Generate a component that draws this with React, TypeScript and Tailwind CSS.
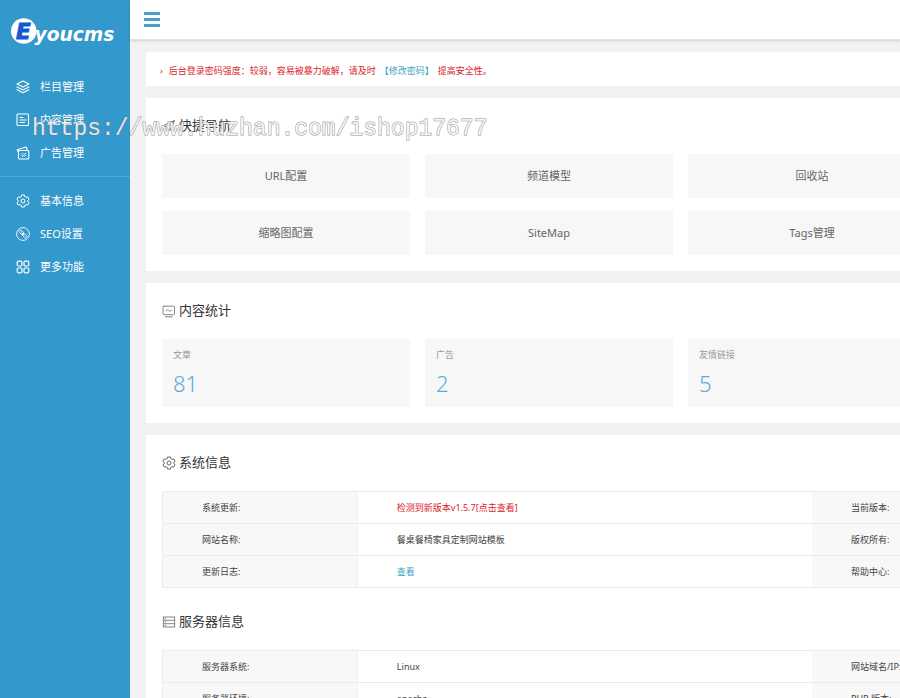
import React from 'react';

type IconProps = { className?: string };

const LayersIcon = ({ className }: IconProps) => (
  <svg className={className} viewBox="0 0 14 14" fill="none" stroke="currentColor" strokeWidth={1.1} strokeLinejoin="round" strokeLinecap="round">
    <path d="M7 .9 13 4 7 7.100 1 4Z" />
    <path d="M1 6.900 7 10 13 6.900" />
    <path d="M1 9.700 7 12.800 13 9.700" />
  </svg>
);

const DocIcon = ({ className }: IconProps) => (
  <svg className={className} viewBox="0 0 14 14" fill="none" stroke="currentColor" strokeWidth={1.1} strokeLinecap="round">
    <rect x="1" y="1" width="11.500" height="11.500" rx="1" />
    <path d="M4 4.500h3M4 7h6M4 9.500h4.500" />
  </svg>
);

const AdIcon = ({ className }: IconProps) => (
  <svg className={className} viewBox="0 0 14 14" fill="none" stroke="currentColor" strokeWidth={1.1} strokeLinejoin="round" strokeLinecap="round">
    <rect x="2.500" y="4.500" width="10.300" height="8.500" rx="1" />
    <path d="M2.500 6.500 1.200 3.800 10.200 1l1.200 3.400" />
    <path d="M5.200 9.200 7.200 7.200M6.200 10.800 9.800 7.200M8.600 10.600l1.200-1.200" strokeWidth={0.9} />
  </svg>
);

const GearIcon = ({ className }: IconProps) => (
  <svg className={className} viewBox="0 0 14 14" fill="none" stroke="currentColor" strokeWidth={1} strokeLinejoin="round">
    <path d="M5.600 1h2.800l.4 1.700 1.200.7 1.700-.5 1.400 2.400L11.800 6.400v1.200l1.300 1.100-1.400 2.400-1.700-.5-1.200.7L8.400 13H5.600l-.4-1.700L4 10.600l-1.700.5L.9 8.700 2.200 7.600V6.400L.9 5.300l1.400-2.400 1.700.5 1.200-.7Z" />
    <circle cx="7" cy="7" r="2" />
  </svg>
);

const LinkIcon = ({ className }: IconProps) => (
  <svg className={className} viewBox="0 0 14 14" fill="none" stroke="currentColor" strokeWidth={0.9}>
    <circle cx="7" cy="7" r="6.4" />
    <rect x="2.900" y="4" width="5" height="2.800" rx="1.400" transform="rotate(45 5.400 5.400)" />
    <rect x="6.100" y="7.200" width="5" height="2.800" rx="1.400" transform="rotate(45 8.600 8.600)" />
    <path d="M5.600 5.600 8.400 8.400" />
  </svg>
);

const GridIcon = ({ className }: IconProps) => (
  <svg className={className} viewBox="0 0 14 14" fill="none" stroke="currentColor" strokeWidth={1.2}>
    <rect x="1.200" y="1.200" width="4.800" height="4.800" rx="1.200" />
    <rect x="8" y="1.200" width="4.800" height="4.800" rx="1.200" />
    <rect x="1.200" y="8" width="4.800" height="4.800" rx="1.200" />
    <rect x="8" y="8" width="4.800" height="4.800" rx="1.200" />
  </svg>
);

const RocketIcon = ({ className }: IconProps) => (
  <svg className={className} viewBox="0 0 14 14" fill="none" stroke="currentColor" strokeWidth={0.9} strokeLinejoin="round">
    <path d="M12.500 1.500 1.500 6.500l3 1.500 8-6.500-4.500 10-2.500-2.500v3.500l1.200-2" />
  </svg>
);

const MonitorIcon = ({ className }: IconProps) => (
  <svg className={className} viewBox="0 0 14 14" fill="none" stroke="currentColor" strokeWidth={0.8} strokeLinecap="round">
    <rect x="1" y="2.200" width="11.500" height="8.500" rx="1" />
    <path d="M3.800 6.800c1-1.200 2-1.200 3-.3s2 .9 3-.3M3.500 12.800h6.500" />
  </svg>
);

const ServerIcon = ({ className }: IconProps) => (
  <svg className={className} viewBox="0 0 14 14" fill="none" stroke="currentColor" strokeWidth={0.8}>
    <rect x="1.300" y="2" width="11.400" height="10" />
    <path d="M1.300 5.300h11.400M1.300 8.700h11.400M2.800 3.700h1.400M2.800 7h1.400M2.800 10.400h1.400" />
  </svg>
);

const mainMenu = [
  { label: '栏目管理', icon: LayersIcon },
  { label: '内容管理', icon: DocIcon },
  { label: '广告管理', icon: AdIcon },
];

const settingsMenu = [
  { label: '基本信息', icon: GearIcon },
  { label: 'SEO设置', icon: LinkIcon },
  { label: '更多功能', icon: GridIcon },
];

// Listed column by column, two to a column
const shortcuts = ['URL配置', '缩略图配置', '频道模型', 'SiteMap', '回收站', 'Tags管理'];

const stats = [
  { label: '文章', value: 81 },
  { label: '广告', value: 2 },
  { label: '友情链接', value: 5 },
];

type Row = { label: string; value: React.ReactNode; side: string };

const systemRows: Row[] = [
  { label: '系统更新:', value: <a href="#update" className="text-[#d9232b]">检测到新版本v1.5.7[点击查看]</a>, side: '当前版本:' },
  { label: '网站名称:', value: '餐桌餐椅家具定制网站模板', side: '版权所有:' },
  { label: '更新日志:', value: <a href="#log" className="text-[#3aa5c8]">查看</a>, side: '帮助中心:' },
];

const serverRows: Row[] = [
  { label: '服务器系统:', value: 'Linux', side: '网站域名/IP:' },
  { label: '服务器环境:', value: 'apache', side: 'PHP 版本:' },
];

const Menu = ({ items }: { items: typeof mainMenu }) => (
  <ul>
    {items.map(({ label, icon: Icon }) => (
      <li key={label}>
        <a href="#menu" className="flex h-[33px] items-center gap-2.5 px-4 text-[11px] text-white">
          <Icon className="h-3.5 w-3.5" />
          <span className="pt-0.5">{label}</span>
        </a>
      </li>
    ))}
  </ul>
);

const PanelTitle = ({ icon: Icon, children }: { icon: React.FC<IconProps>; children: React.ReactNode }) => (
  <h2 className="flex h-14 items-center gap-[3px] text-[13px] text-[#333]">
    <Icon className="h-3.5 w-3.5 text-[#666]" />
    {children}
  </h2>
);

const InfoTable = ({ rows }: { rows: Row[] }) => (
  <table className="w-full table-fixed border-collapse border border-[#ebebeb] text-left text-[9px] text-[#444]">
    <colgroup>
      <col className="w-[15%]" />
      <col className="w-[35%]" />
      <col className="w-[15%]" />
      <col className="w-[35%]" />
    </colgroup>
    <tbody>
      {rows.map((row) => (
        <tr key={row.label} className="h-8 border-b border-[#ebebeb]">
          <th scope="row" className="border-r border-[#f0f0f0] bg-[#f8f8f8] pl-[39px] font-normal">{row.label}</th>
          <td className="pl-[39px]">{row.value}</td>
          <th scope="row" className="bg-[#f8f8f8] pl-[39px] font-normal">{row.side}</th>
          <td></td>
        </tr>
      ))}
    </tbody>
  </table>
);

const App: React.FC = () => {
  return (
    <div className="relative flex h-screen overflow-hidden bg-[#f2f2f2] font-['Noto_Sans','Noto_Sans_CJK_SC',sans-serif]">
      <aside className="w-[130px] shrink-0 bg-[#3398cc]">
        <div className="flex h-[70px] items-center px-2.5 pb-2">
          <svg className="h-9 w-28" viewBox="0 0 112 36" role="img" aria-label="Eyoucms">
            <circle cx="14" cy="18" r="13" fill="#fff" />
            <text x="6" y="26" fontFamily="DejaVu Sans" fontSize="22" fontWeight="bold" fontStyle="italic" fill="#1458d4" stroke="#1458d4" strokeWidth="1">E</text>
            <text x="25" y="28" fontFamily="DejaVu Sans" fontSize="19" fontWeight="bold" fontStyle="italic" fill="#fff">youcms</text>
          </svg>
        </div>
        <nav>
          <Menu items={mainMenu} />
          <div className="my-[7px] border-t border-[#55a9d6]" />
          <Menu items={settingsMenu} />
        </nav>
      </aside>

      <div className="min-w-0 flex-1">
        <header className="flex h-10 items-center border-b border-[#e2e2e2] bg-white px-3.5 shadow-sm">
          <button type="button" aria-label="菜单" className="flex w-4 flex-col gap-[3px]">
            <span className="h-[3px] bg-[#4a9fc8]" />
            <span className="h-[3px] bg-[#4a9fc8]" />
            <span className="h-[3px] bg-[#4a9fc8]" />
          </button>
        </header>

        <main className="flex min-w-[1364px] flex-col gap-3 px-4 pt-3">
          <p className="flex h-[34px] items-center bg-white px-3.5 pt-1 text-[9px] text-[#d9232b]">
            <span className="mr-1.5">›</span>
            后台登录密码强度：较弱，容易被暴力破解，请及时
            <a href="#password" className="mx-1 text-[#3aa5c8]">【修改密码】</a>
            提高安全性。
          </p>

          <section className="bg-white px-4 pb-4">
            <PanelTitle icon={RocketIcon}>快捷导航</PanelTitle>
            <div className="grid grid-flow-col grid-cols-5 grid-rows-2 gap-x-[15px] gap-y-[13px]">
              {shortcuts.map((name) => (
                <a key={name} href="#shortcut" className="flex h-11 items-center justify-center bg-[#f7f7f7] text-[11px] text-[#666]">
                  {name}
                </a>
              ))}
            </div>
          </section>

          <section className="bg-white px-4 pb-4">
            <PanelTitle icon={MonitorIcon}>内容统计</PanelTitle>
            <div className="grid grid-cols-5 gap-[15px]">
              {stats.map((stat) => (
                <a key={stat.label} href="#stat" className="flex h-[68px] flex-col bg-[#f7f7f7] px-[11px] pt-2">
                  <span className="text-[9px] leading-4 text-[#999]">{stat.label}</span>
                  <span className="text-[22px] leading-10 font-light text-[#57add6]">{stat.value}</span>
                </a>
              ))}
            </div>
          </section>

          <section className="bg-white px-4 pb-4">
            <PanelTitle icon={GearIcon}>系统信息</PanelTitle>
            <InfoTable rows={systemRows} />
            <div className="mt-1.5">
              <PanelTitle icon={ServerIcon}>服务器信息</PanelTitle>
            </div>
            <InfoTable rows={serverRows} />
          </section>
        </main>
      </div>

      <div className="pointer-events-none absolute top-28 left-8 font-['Liberation_Mono',monospace] text-[23px] text-white/80 [-webkit-text-stroke:1px_#777777cc] [paint-order:stroke]">
        https://www.huzhan.com/ishop17677
      </div>
    </div>
  );
};

export default App;
